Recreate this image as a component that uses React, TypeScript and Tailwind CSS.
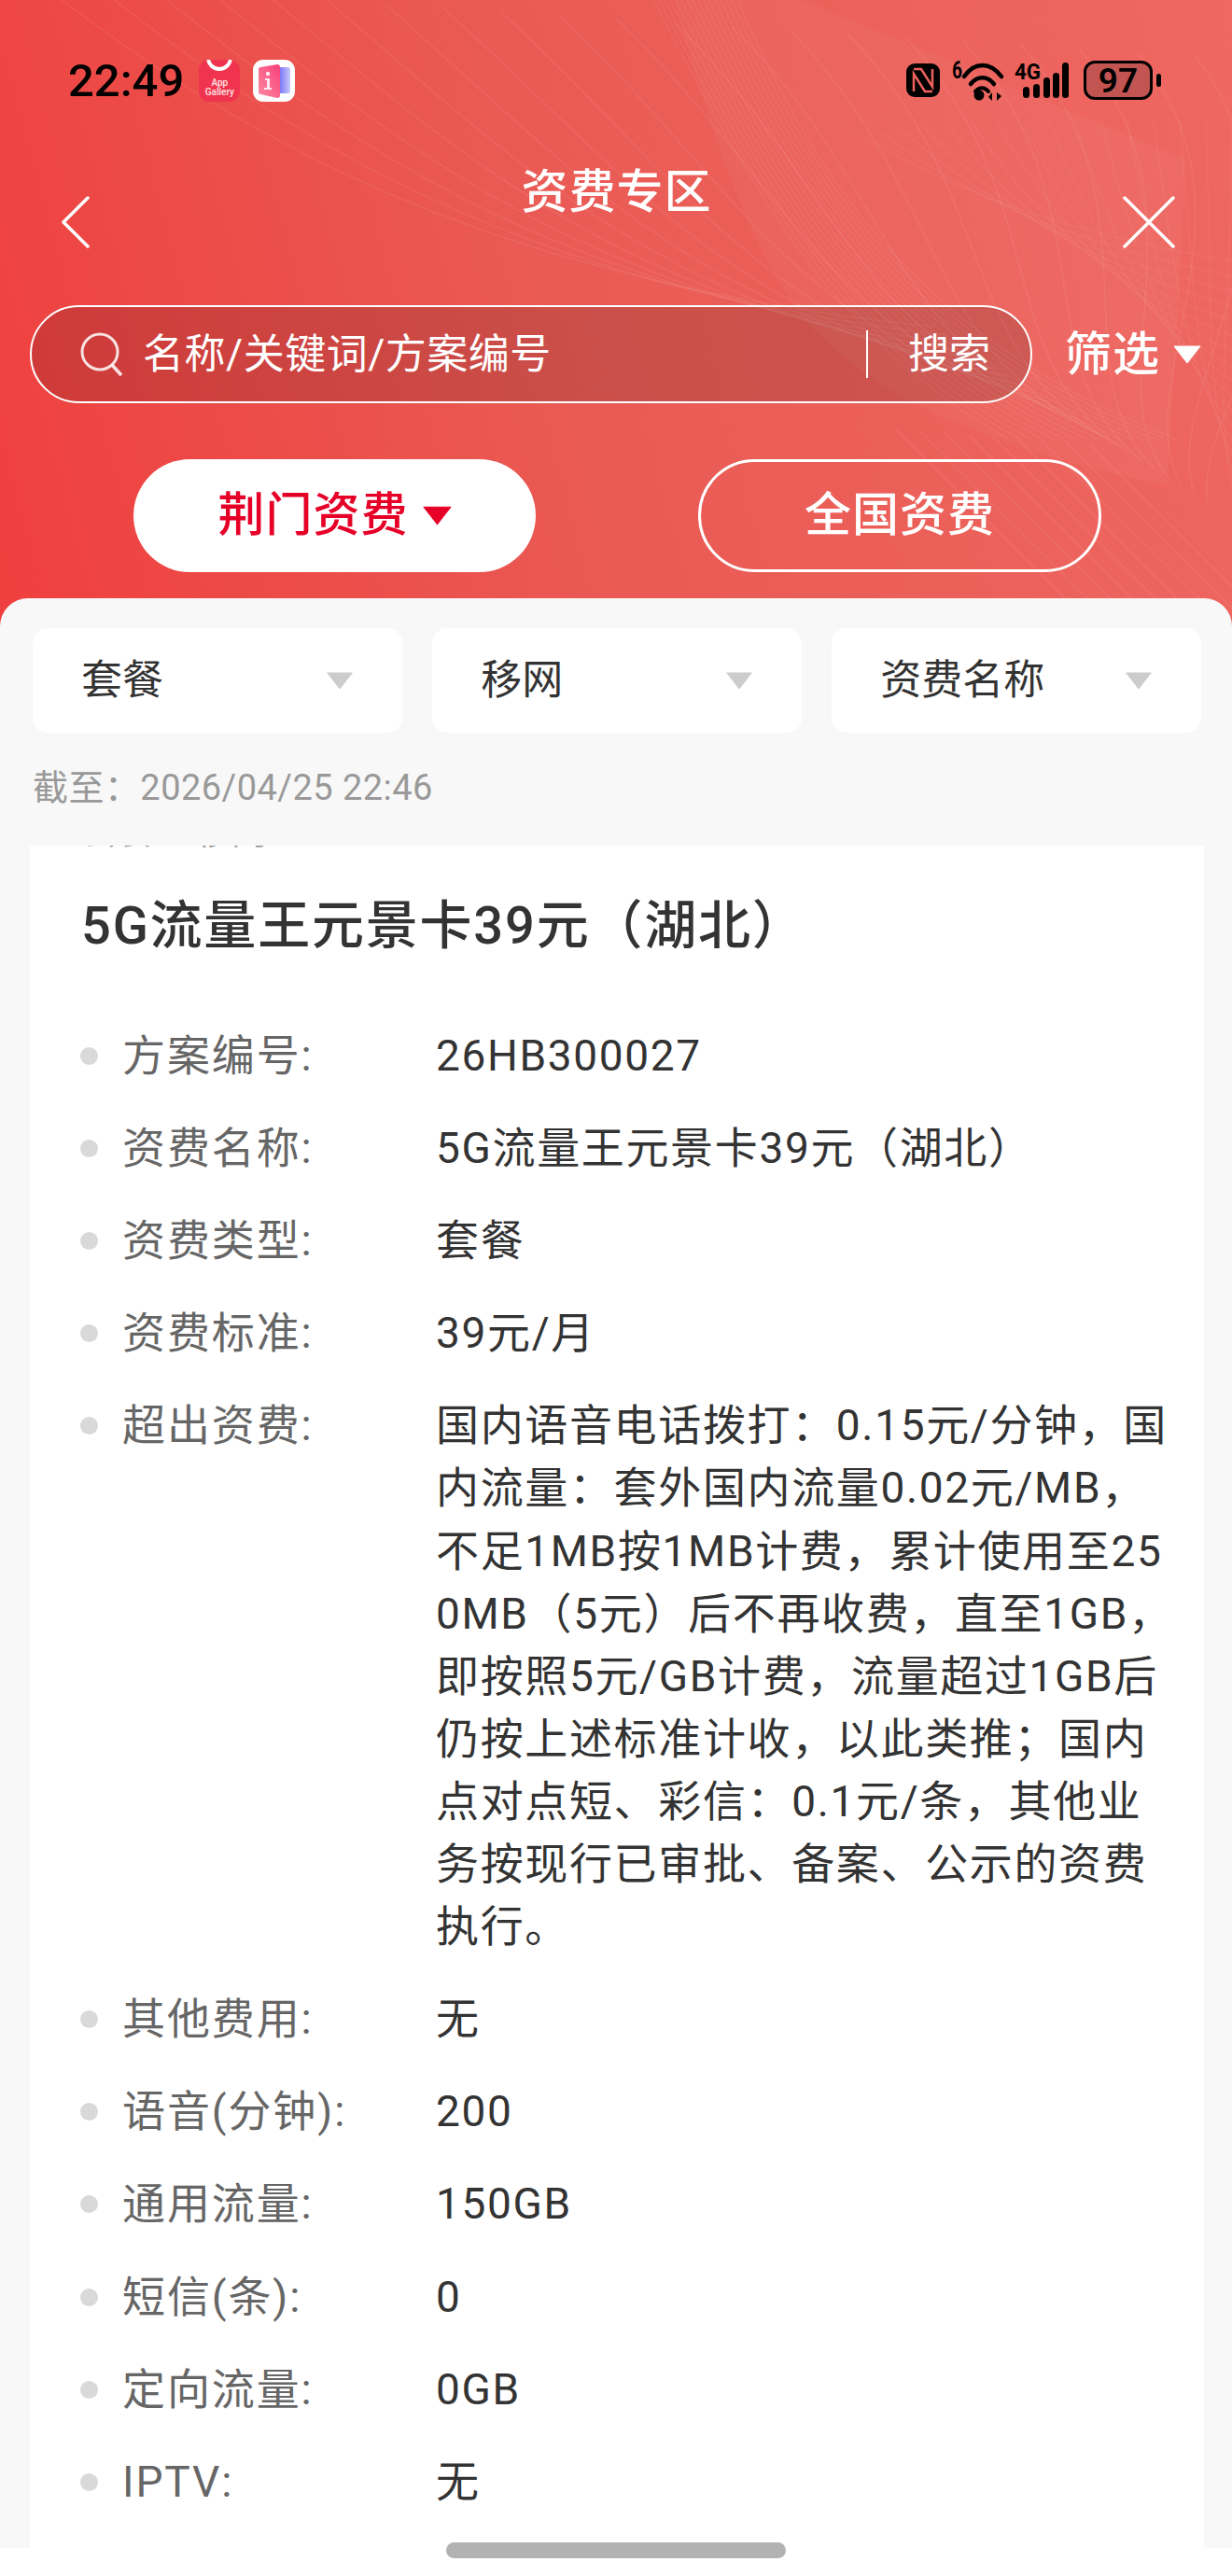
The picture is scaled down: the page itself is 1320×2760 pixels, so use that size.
const rows = [
  { label: "方案编号:", value: "26HB300027" },
  { label: "资费名称:", value: "5G流量王元景卡39元（湖北）" },
  { label: "资费类型:", value: "套餐" },
  { label: "资费标准:", value: "39元/月" },
  {
    label: "超出资费:",
    value:
      "国内语音电话拨打：0.15元/分钟，国内流量：套外国内流量0.02元/MB，不足1MB按1MB计费，累计使用至250MB（5元）后不再收费，直至1GB，即按照5元/GB计费，流量超过1GB后仍按上述标准计收，以此类推；国内点对点短、彩信：0.1元/条，其他业务按现行已审批、备案、公示的资费执行。",
  },
  { label: "其他费用:", value: "无" },
  { label: "语音(分钟):", value: "200" },
  { label: "通用流量:", value: "150GB" },
  { label: "短信(条):", value: "0" },
  { label: "定向流量:", value: "0GB" },
  { label: "IPTV:", value: "无" },
];

const selects = ["套餐", "移网", "资费名称"];

// faint wave lines behind the header
const HeaderLines = () => {
  const curves = Array.from({ length: 22 }, (_, i) => i);
  const fan = Array.from({ length: 16 }, (_, i) => i);
  const diag = Array.from({ length: 9 }, (_, i) => i);
  return (
    <svg className="absolute left-0 top-0" width="1320" height="671" fill="none">
      <path d="M723 0C760 140 800 260 860 340C930 420 1050 480 1250 520L1262 340L1270 170L860 0Z" fill="#fff" fillOpacity="0.035" />
      {curves.map((i) => (
        <path
          key={i}
          d={`M${40 + i * 62} ${-20 + i * 4}C${260 + i * 58} ${150 + i * 4} ${520 + i * 36} ${300 + i * 6} ${1000 + i * 14} ${350 + i * 9}`}
          stroke="#fff"
          strokeOpacity="0.07"
          strokeWidth="1.5"
        />
      ))}
      {fan.map((i) => (
        <path
          key={i}
          d={`M${700 + i * 6} 0C${790 + i * 5} 170 ${880 + i * 6} 360 ${1080 + i * 12} 470`}
          stroke="#fff"
          strokeOpacity="0.06"
          strokeWidth="1.5"
        />
      ))}
      {fan.map((i) => (
        <path
          key={i}
          d={`M${900 + i * 28} 130C${1020 + i * 20} ${210 + i * 8} ${1150 + i * 10} ${250 + i * 12} 1320 ${280 + i * 16}`}
          stroke="#fff"
          strokeOpacity="0.05"
          strokeWidth="1.5"
        />
      ))}
      {diag.map((i) => (
        <path
          key={i}
          d={`M${960 + i * 26} ${460 + i * 2}L${1150 + i * 26} ${650 + i * 2}`}
          stroke="#fff"
          strokeOpacity="0.07"
          strokeWidth="1.5"
        />
      ))}
    </svg>
  );
};

const AppGalleryIcon = () => (
  <div className="relative flex h-[45px] w-[44px] flex-col items-center justify-end overflow-hidden rounded-[11px] bg-[#f0344f] pb-[5px] text-[10px] font-medium leading-[10px] text-[#ffe4e6]">
    <div className="absolute left-[8px] top-[-20px] h-[32px] w-[28px] rounded-full border-[4px] border-white" />
    <span>App</span>
    <span>Gallery</span>
  </div>
);

const InfoIcon = () => (
  <svg width="45" height="45" viewBox="0 0 45 45">
    <defs>
      <linearGradient id="infoPink" x1="0" y1="1" x2="1" y2="0">
        <stop offset="0" stopColor="#fd8aa0" />
        <stop offset="1" stopColor="#f9407a" />
      </linearGradient>
      <linearGradient id="infoBlue" x1="0" y1="0" x2="1" y2="0">
        <stop offset="0" stopColor="#6f6cf5" />
        <stop offset="1" stopColor="#c9c8fb" />
      </linearGradient>
    </defs>
    <rect width="45" height="45" rx="11" fill="#fff" />
    <path d="M27 8H38C39 8 40 9 40 10V34C40 35 39 36 38 36H27Z" fill="url(#infoBlue)" />
    <path d="M6 10C6 9 7 8 8 8L26 5C28 5 29 6 29 8V38C29 40 28 41 26 41L8 37C7 37 6 36 6 35Z" fill="url(#infoPink)" />
    <circle cx="16" cy="15" r="2.2" fill="#ffe9ee" />
    <path d="M13 20H18V30H20V32H12V30H15V22H13Z" fill="#ffe9ee" />
  </svg>
);

const StatusIcons = () => (
  <div className="flex items-center">
    {/* nfc */}
    <svg width="36" height="38" viewBox="0 0 36 38" fill="none">
      <rect x="0" y="1" width="36" height="36" rx="9" fill="#000" />
      <path d="M8 7L16 7L28 26V7" stroke="#ef625c" strokeWidth="2.5" />
      <path d="M28 31L20 31L8 12V31" stroke="#ef625c" strokeWidth="2.5" />
    </svg>
    {/* wifi 6 */}
    <svg className="ml-[13px] overflow-visible" width="55" height="46" viewBox="0 0 55 46" fill="none">
      <text x="0" y="21" fontSize="26" fontWeight="700" fontFamily="Roboto" fill="#000" textLength="11" lengthAdjust="spacingAndGlyphs">6</text>
      <path d="M13 19C24 3 41 3 53 19" stroke="#000" strokeWidth="4.5" strokeLinecap="round" />
      <path d="M20 27C27 18 38 18 45 27" stroke="#000" strokeWidth="4.5" strokeLinecap="round" />
      <path d="M25 35C29 30 35 30 39 35" stroke="#000" strokeWidth="4" strokeLinecap="round" />
      <circle cx="29" cy="39" r="5.5" fill="#000" />
      <path d="M43 45V36L39 41ZM48 36V45L53 40Z" fill="#000" />
    </svg>
    {/* 4g signal */}
    <svg className="ml-[12px] overflow-visible" width="58" height="40" viewBox="0 0 58 40">
      <text x="0" y="19" fontSize="23" fontWeight="700" fontFamily="Roboto" fill="#000" textLength="28" lengthAdjust="spacingAndGlyphs">4G</text>
      <rect x="9" y="27" width="7" height="12" rx="3.5" fill="#000" />
      <rect x="20" y="24" width="7" height="15" rx="3.5" fill="#000" />
      <rect x="31" y="17" width="7" height="22" rx="3.5" fill="#000" />
      <rect x="41" y="12" width="7" height="27" rx="3.5" fill="#000" />
      <rect x="51" y="1" width="7" height="38" rx="3.5" fill="#000" />
    </svg>
    {/* battery */}
    <div className="ml-[16px] flex h-[42px] w-[74px] items-center justify-center rounded-[12px] border-[3px] border-black bg-[#c25552] text-[37px] font-semibold leading-none text-black">
      97
    </div>
    <div className="ml-[4px] h-[14px] w-[5px] rounded-full bg-black" />
  </div>
);

const Triangle = ({ className }: { className: string }) => (
  <svg className={className} viewBox="0 0 30 20">
    <path d="M1 1H29L15 19Z" fill="currentColor" stroke="currentColor" strokeLinejoin="round" />
  </svg>
);

const App = () => {
  return (
    <div className="relative h-[2760px] w-[1320px] overflow-hidden bg-white font-['Roboto','Noto_Sans_CJK_SC',sans-serif]">
      {/* header */}
      <header className="relative h-[671px] bg-[linear-gradient(75deg,#ef3f3e_0%,#ea5a54_45%,#ef6862_100%)] text-white">
        <HeaderLines />
        <div className="relative">
          <div className="flex h-[172px] items-center pl-[73px] pr-[76px]">
            <span className="text-[49px] font-medium leading-none text-black">22:49</span>
            <div className="ml-[16px] flex gap-[14px]">
              <AppGalleryIcon />
              <InfoIcon />
            </div>
            <div className="ml-auto">
              <StatusIcons />
            </div>
          </div>

          <div className="grid h-[132px] grid-cols-[1fr_auto_1fr] pl-[61px] pr-[60px]">
            <svg className="self-center" width="36" height="56" viewBox="0 0 36 56" fill="none">
              <path d="M33 2L7 28L33 54" stroke="#fff" strokeWidth="3.5" strokeLinecap="round" strokeLinejoin="round" />
            </svg>
            <h1 className="self-start text-[50px] font-medium leading-[68px] tracking-[1px]">资费专区</h1>
            <svg className="self-center justify-self-end" width="58" height="58" viewBox="0 0 58 58" fill="none">
              <path d="M3 3L55 55M55 3L3 55" stroke="#fff" strokeWidth="3.5" strokeLinecap="round" />
            </svg>
          </div>

          {/* search */}
          <div className="mt-[23px] flex items-center pl-[32px]">
            <div className="flex h-[105px] w-[1074px] items-center rounded-full border-2 border-white bg-black/[0.13] pl-[52px]">
              <svg width="46" height="48" viewBox="0 0 46 48" fill="none">
                <circle cx="21" cy="21" r="19" stroke="#fff" strokeOpacity="0.85" strokeWidth="3" />
                <path d="M34 35L44 46" stroke="#fff" strokeOpacity="0.85" strokeWidth="3.5" />
              </svg>
              <span className="ml-[21px] text-[44px] leading-none tracking-[0.5px]">名称/关键词/方案编号</span>
              <div className="ml-auto h-[51px] w-[2px] bg-white" />
              <span className="ml-[43px] mr-[43px] text-[44px] leading-none">搜索</span>
            </div>
            <span className="ml-[35px] text-[50px] font-medium leading-none tracking-[1px]">筛选</span>
            <Triangle className="ml-[14px] h-[20px] w-[30px] text-white" />
          </div>

          {/* tabs */}
          <div className="mt-[60px] flex justify-center gap-[174px] pl-[3px]">
            <button className="flex h-[121px] w-[431px] items-center justify-center rounded-full bg-white text-[50px] font-medium tracking-[1px] text-[#e60027]">
              荆门资费
              <Triangle className="ml-[15px] h-[21px] w-[31px]" />
            </button>
            <button className="flex h-[121px] w-[432px] items-center justify-center rounded-full border-[3px] border-white text-[50px] font-medium tracking-[1px]">
              全国资费
            </button>
          </div>
        </div>
      </header>

      {/* panel */}
      <section className="relative -mt-[30px] flex h-[2089px] flex-col rounded-t-[30px] bg-[#f8f8f8]">
        <div className="grid grid-cols-3 gap-[32.5px] pl-[35px] pr-[33px] pt-[32px]">
          {selects.map((s) => (
            <div key={s} className="flex h-[112px] items-center justify-between rounded-[16px] bg-white pl-[52px] pr-[52px]">
              <span className="text-[44px] leading-none text-[#333]">{s}</span>
              <Triangle className="h-[19px] w-[30px] text-[#ccc]" />
            </div>
          ))}
        </div>

        <p className="ml-[35px] mt-[34px] text-[38px] leading-[50px] tracking-[0.45px] text-[#999]">截至：2026/04/25 22:46</p>

        <div className="ml-[32px] mr-[30px] mt-[37px] flex-1 overflow-hidden bg-white">
          {/* previous card scrolled under the top edge */}
          <div className="-mt-[38px] flex h-[46px] gap-[46px] pl-[56px] text-[38px] leading-[46px] text-[#999]">
            <span>套餐</span>
            <span>移网</span>
          </div>
          <h2 className="mt-[38px] pl-[55px] text-[56px] font-medium leading-[80px] tracking-[1.8px] text-[#333]">
            5G流量王元景卡39元（湖北）
          </h2>

          <ul className="mt-[66px] flex flex-col gap-[32px]">
            {rows.map((r) => (
              <li key={r.label} className="flex text-[46px] leading-[67.1px] tracking-[1.65px]">
                <span className="ml-[54px] mt-[24px] h-[19px] w-[19px] shrink-0 rounded-full bg-[#d9d9d9]" />
                <span className="ml-[26px] w-[336px] shrink-0 tracking-[1.9px] text-[#666]">{r.label}</span>
                <span className="w-[800px] break-all text-[#333]">{r.value}</span>
              </li>
            ))}
          </ul>
        </div>
      </section>

      {/* home indicator */}
      <div className="absolute left-[478px] top-[2724px] h-[17px] w-[364px] rounded-full bg-[#b2b2b2]" />
    </div>
  );
};

export default App;
